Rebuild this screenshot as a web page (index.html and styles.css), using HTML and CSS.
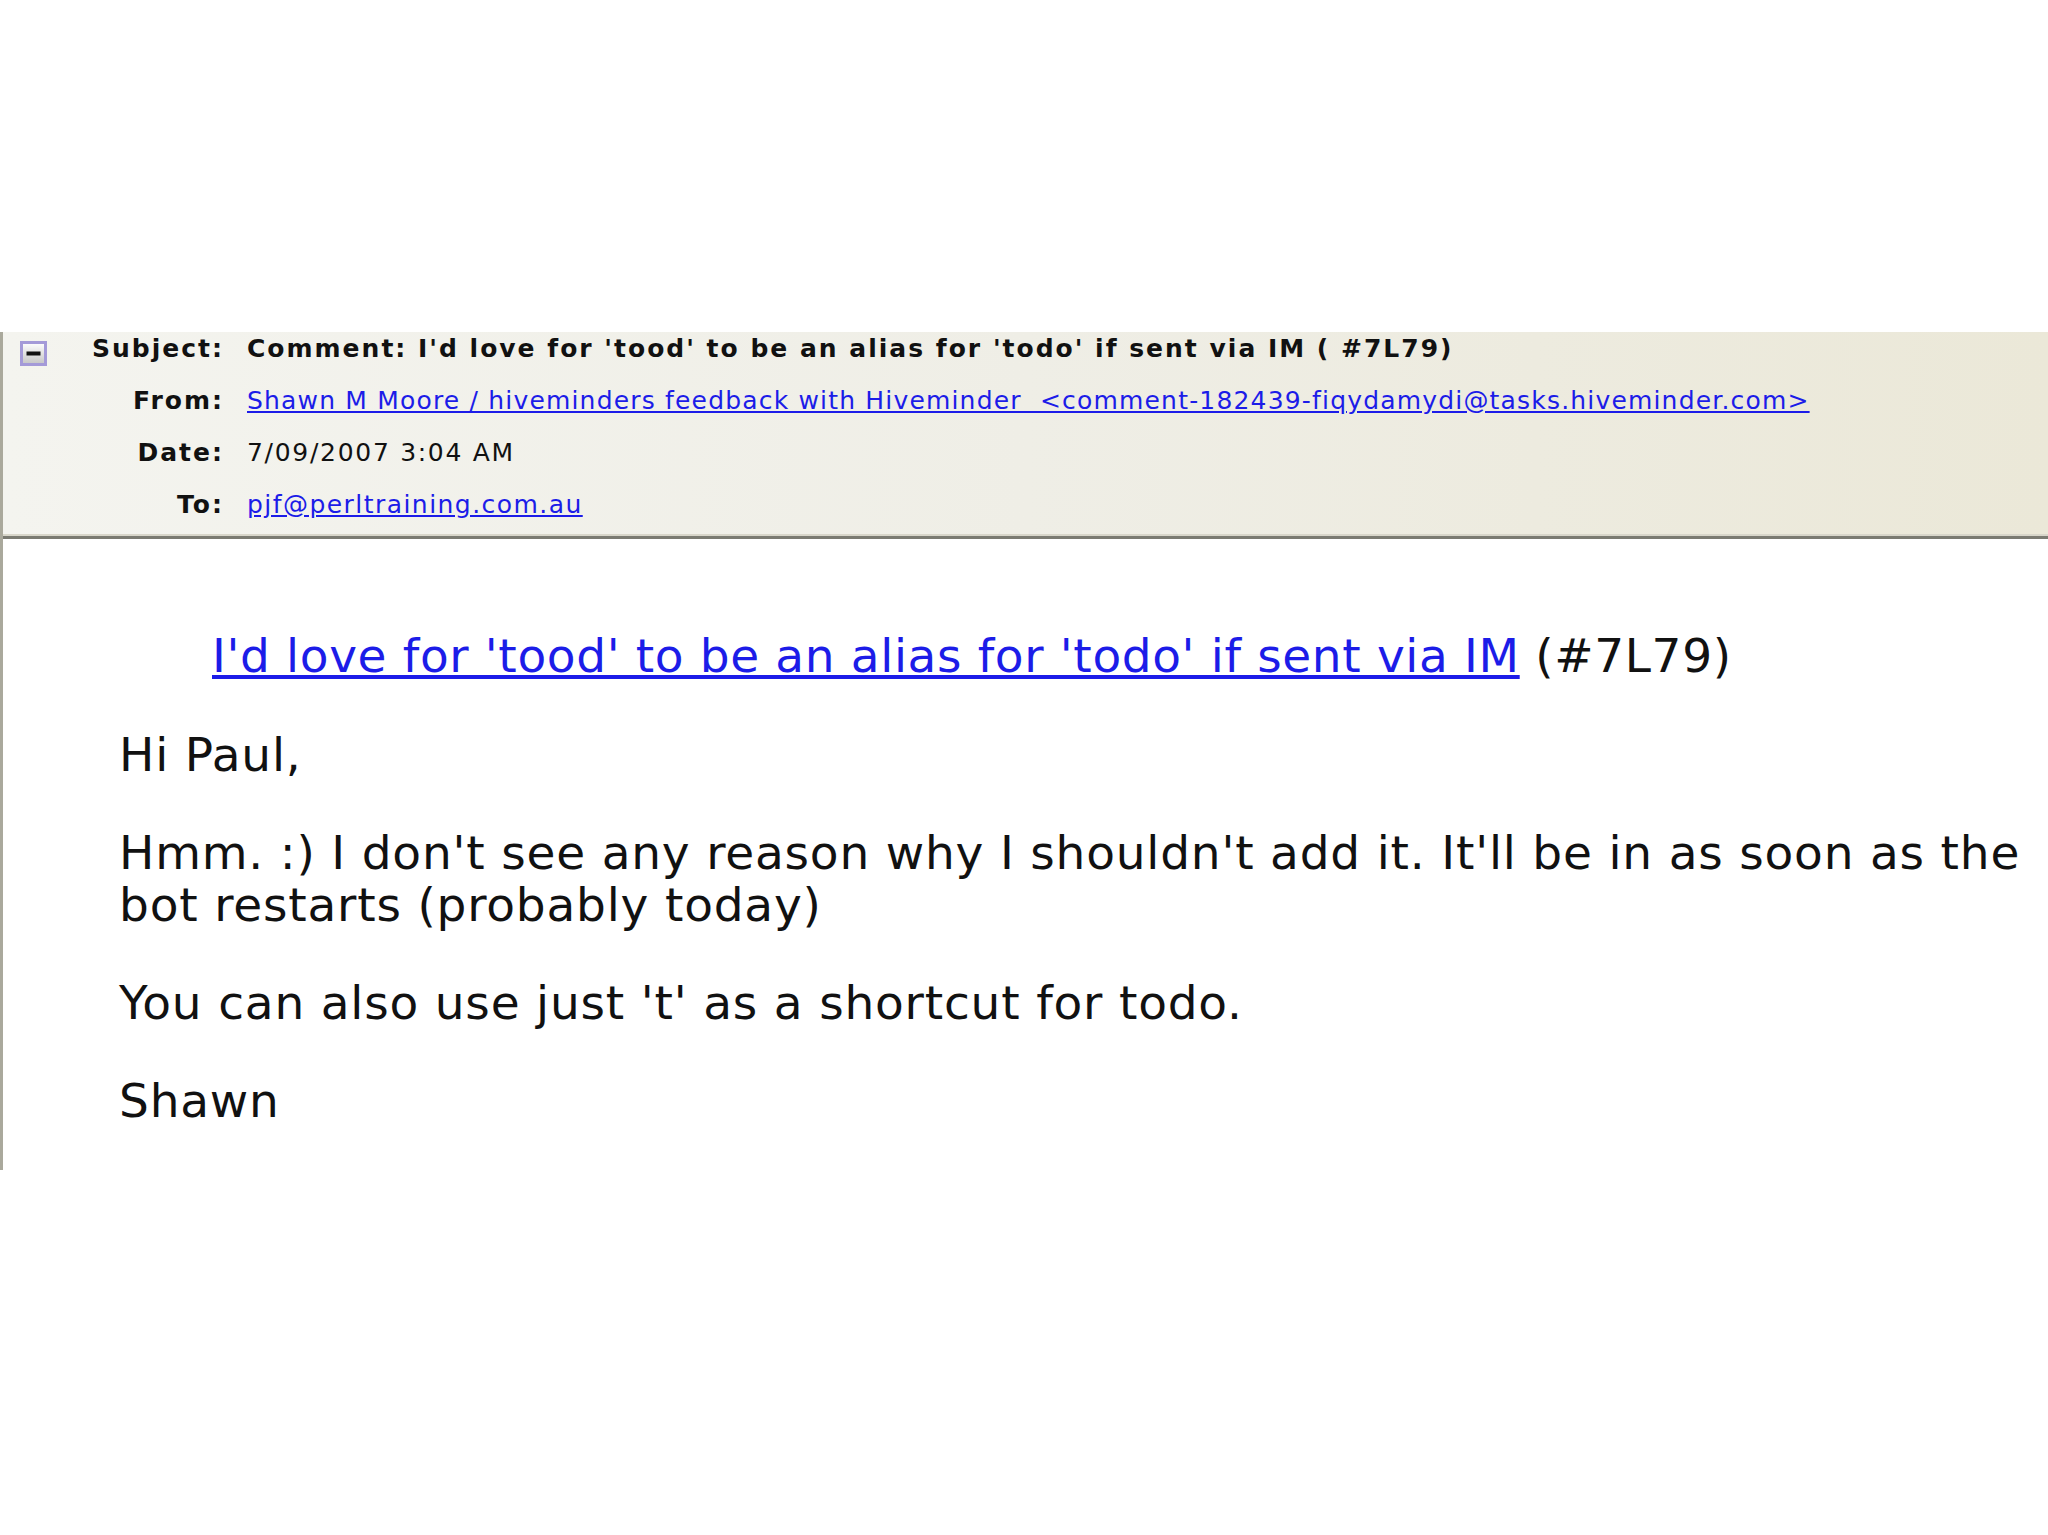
FILE: index.html
```html
<!DOCTYPE html>
<html>
<head>
<meta charset="utf-8">
<link rel="stylesheet" href="styles.css">
</head>
<body>
<div class="top-space"></div>
<div class="message">
  <div class="header">
    <div class="icon-cell">
      <svg class="collapse" width="27" height="25" viewBox="0 0 27 25">
        <defs>
          <linearGradient id="g" x1="0" y1="0" x2="0" y2="1">
            <stop offset="0" stop-color="#ffffff"/>
            <stop offset="1" stop-color="#c4c4c4"/>
          </linearGradient>
        </defs>
        <rect x="1.5" y="1.5" width="24" height="22" fill="url(#g)" stroke="#a49ad8" stroke-width="3"/>
        <rect x="6.5" y="10.5" width="14" height="4" fill="#111"/>
      </svg>
    </div>
    <div class="label">Subject:</div>
    <div class="value subject">Comment: I'd love for 'tood' to be an alias for 'todo' if sent via IM ( #7L79)</div>
    <div class="icon-cell"></div>
    <div class="label">From:</div>
    <div class="value"><a class="from" href="#">Shawn M Moore / hiveminders feedback with Hiveminder&nbsp; &lt;comment-182439-fiqydamydi@tasks.hiveminder.com&gt;</a></div>
    <div class="icon-cell"></div>
    <div class="label">Date:</div>
    <div class="value date">7/09/2007 3:04 AM</div>
    <div class="icon-cell"></div>
    <div class="label">To:</div>
    <div class="value"><a href="#">pjf@perltraining.com.au</a></div>
  </div>
  <div class="body">
    <p class="title"><a href="#">I'd love for 'tood' to be an alias for 'todo' if sent via IM</a> (#7L79)</p>
    <p>Hi Paul,</p>
    <p>Hmm. :) I don't see any reason why I shouldn't add it. It'll be in as soon as the<br>bot restarts (probably today)</p>
    <p>You can also use just 't' as a shortcut for todo.</p>
    <p class="last">Shawn</p>
  </div>
</div>
</body>
</html>
```
FILE: styles.css
```css
html, body {
  margin: 0;
  padding: 0;
  background: #ffffff;
}
body {
  width: 2048px;
  height: 1535px;
  overflow: hidden;
}
.top-space {
  height: 332px;
}
.message {
  border-left: 3px solid #aaa99c;
}
.header {
  display: grid;
  grid-template-columns: 43px 176px 1fr;
  row-gap: 18px;
  background: linear-gradient(to right, #f4f4ef 0%, #efeee6 50%, #ebe8d8 100%);
  font-family: "DejaVu Sans", sans-serif;
  font-size: 25px;
  line-height: 34px;
  letter-spacing: 1.45px;
  color: #111;
  padding-bottom: 14px;
  border-bottom: 3px solid #7b7b72;
  box-shadow: inset 0 -2px 0 #d8d6ca;
}
.icon-cell {
  padding-left: 17px;
}
.collapse {
  display: block;
  margin-top: 9px;
}
.label {
  font-weight: bold;
  text-align: right;
  letter-spacing: 2px;
  margin-right: -2px;
}
.value {
  padding-left: 25px;
  white-space: nowrap;
}
.subject {
  font-weight: bold;
  letter-spacing: 2px;
}
.date {
  letter-spacing: 1.7px;
}
.value a {
  color: #1c1ce8;
  text-decoration: underline;
}
.value a.from {
  letter-spacing: 1.18px;
}
.body {
  font-family: "DejaVu Sans", sans-serif;
  font-size: 47px;
  line-height: 52px;
  letter-spacing: 0.8px;
  color: #111;
  padding: 91px 0 43px 116px;
}
.body p {
  margin: 0 0 46px 0;
  white-space: nowrap;
}
.body p.last {
  margin-bottom: 0;
}
.body .title {
  margin-left: 93px;
  margin-bottom: 47px;
  letter-spacing: 0.63px;
}
.body .title a {
  color: #1c1ce8;
  text-decoration: underline;
}
```
